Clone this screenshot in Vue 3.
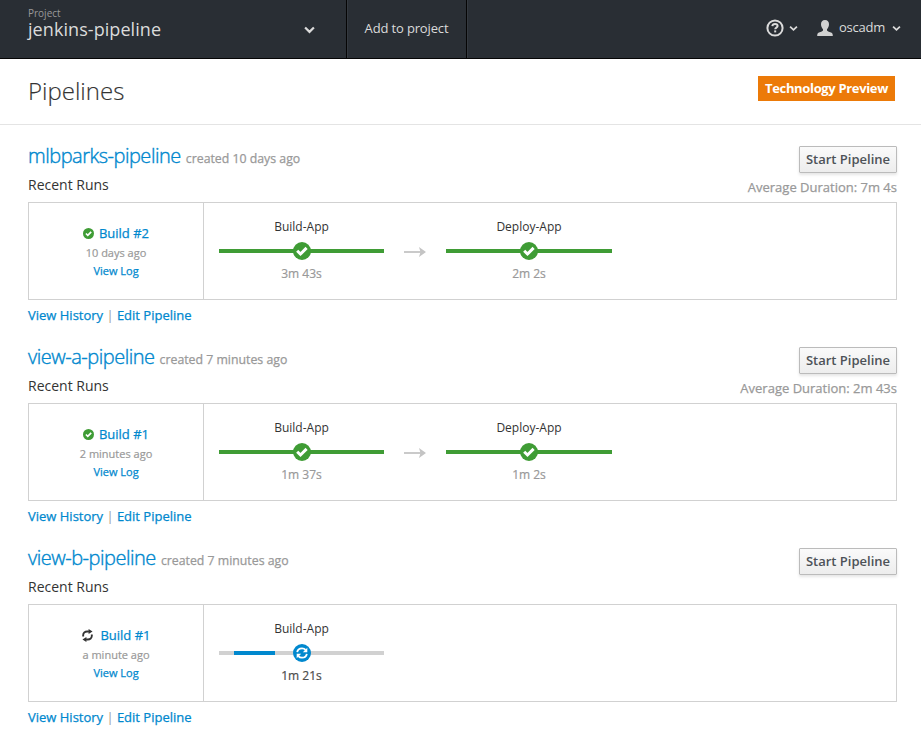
<script setup>
const pipelines = [
  {
    name: 'mlbparks-pipeline', created: 'created 10 days ago', average: 'Average Duration: 7m 4s',
    build: 'Build #2', age: '10 days ago', running: false,
    stages: [{ name: 'Build-App', time: '3m 43s' }, { name: 'Deploy-App', time: '2m 2s' }],
  },
  {
    name: 'view-a-pipeline', created: 'created 7 minutes ago', average: 'Average Duration: 2m 43s',
    build: 'Build #1', age: '2 minutes ago', running: false,
    stages: [{ name: 'Build-App', time: '1m 37s' }, { name: 'Deploy-App', time: '1m 2s' }],
  },
  {
    name: 'view-b-pipeline', created: 'created 7 minutes ago', average: '',
    build: 'Build #1', age: 'a minute ago', running: true,
    stages: [{ name: 'Build-App', time: '1m 21s' }],
  },
]
</script>

<template>
  <div class="page">
    <header class="navbar">
      <div class="project">
        <div class="project-text">
          <span class="project-label">Project</span>
          <span class="project-name">jenkins-pipeline</span>
        </div>
        <svg class="caret big" viewBox="0 0 10 7"><path d="M1 1.2 5 5.2 9 1.2" /></svg>
      </div>
      <div class="add">Add to project</div>
      <div class="user-menu">
        <svg class="help" viewBox="0 0 18 18">
          <circle cx="9" cy="9" r="7.6" />
          <path d="M6.3 7.2C6.500 5.700 7.600 5 9.100 5c1.500 0 2.500.8 2.500 2 0 1.700-2.400 1.600-2.400 3.300" />
          <path d="M9.200 11.400v2" />
        </svg>
        <svg class="caret small" viewBox="0 0 10 7"><path d="M1.200 1.500 5 5 8.800 1.500" /></svg>
        <svg class="person" viewBox="0 0 16 16">
          <path d="M8 0c2.600 0 4 1.700 4 4.300 0 2.100-.9 3.900-2 4.900v1.200c0 .8 3.200 1.500 4.600 2.400.9.600 1.200 1.600 1.200 3.200H.2c0-1.600.3-2.600 1.200-3.200C2.800 11.900 6 11.200 6 10.400V9.200c-1.100-1-2-2.800-2-4.900C4 1.700 5.400 0 8 0z" />
        </svg>
        <span class="user-name">oscadm</span>
        <svg class="caret small" viewBox="0 0 10 7"><path d="M1.200 1.500 5 5 8.800 1.500" /></svg>
      </div>
    </header>

    <div class="title-bar">
      <h1>Pipelines</h1>
      <span class="preview">Technology Preview</span>
    </div>

    <main>
      <section v-for="p in pipelines" :key="p.name" class="pipeline">
        <div class="heading">
          <div class="heading-left">
            <h2><a class="name">{{ p.name }}</a><small>{{ p.created }}</small></h2>
            <div class="recent">Recent Runs</div>
          </div>
          <div class="heading-right">
            <button>Start Pipeline</button>
            <div v-if="p.average" class="average">{{ p.average }}</div>
          </div>
        </div>
        <div class="run">
          <div class="build">
            <div class="build-title">
              <svg v-if="p.running" class="sync" viewBox="0 0 18 18">
                <path class="arc" d="M3 10.500V8.500C3 5.500 5.500 3.400 8.500 3.400H11M15 7.500v2c0 3-2.500 5.100-5.500 5.100H7" />
                <path class="tip" d="M10.500 0 16 3.400 10.500 7zM7.500 11v7L2 14.600z" />
              </svg>
              <svg v-else class="ok" viewBox="0 0 18 18">
                <circle cx="9" cy="9" r="9" /><path d="M4.800 9l3 3 5.600-5.800" />
              </svg>
              <a>{{ p.build }}</a>
            </div>
            <div class="age">{{ p.age }}</div>
            <a class="log">View Log</a>
          </div>
          <div class="stages">
            <template v-for="(s, i) in p.stages" :key="s.name">
              <svg v-if="i" class="arrow" viewBox="0 0 22 10">
                <path class="shaft" d="M0 5H18" /><path class="head" d="M15 0 22 5 15 10 16.500 5z" />
              </svg>
              <div class="stage" :class="{ running: p.running }">
                <div class="stage-name">{{ s.name }}</div>
                <div class="track">
                  <div v-if="p.running" class="progress"></div>
                  <svg v-if="p.running" class="status" viewBox="0 0 18 18">
                    <circle cx="9" cy="9" r="9" />
                    <path d="M4.200 8.200C4.600 5.700 6.500 4.300 9 4.300c1.500 0 2.700.5 3.600 1.600M13.800 9.800c-.4 2.500-2.300 3.900-4.800 3.900-1.500 0-2.700-.5-3.600-1.600" />
                    <path class="fill" d="M14.300 3.800v4.400H9.800zM3.700 14.200V9.800h4.500z" />
                  </svg>
                  <svg v-else class="status" viewBox="0 0 18 18">
                    <circle cx="9" cy="9" r="9" /><path class="check" d="M4.200 8.700l3.300 3.300 6.100-6.100" />
                  </svg>
                </div>
                <div class="stage-time">{{ s.time }}</div>
              </div>
            </template>
          </div>
        </div>
        <div class="links"><a>View History</a><span>|</span><a>Edit Pipeline</a></div>
      </section>
    </main>
  </div>
</template>

<style>
html, body { background: #fff; overflow: hidden; }
</style>

<style scoped>
* { box-sizing: border-box; }
.page {
  height: 730px; overflow: hidden; background: #fff; color: #333;
  font-family: "Open Sans", sans-serif; font-size: 13px; line-height: 20px;
}
svg { display: block; flex: none; }
a { color: #0088ce; -webkit-text-stroke: 0.25px #0088ce; }
.navbar {
  display: flex; height: 59px; background: #292e34;
  border-bottom: 1px solid #050505; color: #dbdbdb;
}
.project {
  display: flex; justify-content: space-between; width: 347px;
  padding: 7px 31px 0 28px; border-right: 1px solid #050505;
}
.project-text { display: flex; flex-direction: column; }
.project-label { font-size: 10px; line-height: 13px; color: #999; }
.project-name { font-size: 18px; line-height: 18px; letter-spacing: 0.07px; }
.caret { fill: none; stroke: #dbdbdb; stroke-width: 2; }
.caret.big { width: 11px; height: 8px; margin-top: 19px; }
.caret.small { width: 9px; height: 7px; margin-top: 1px; }
.add {
  display: flex; align-items: center; justify-content: center; width: 120px; padding: 0 1px 3px 0;
  letter-spacing: -0.15px;
  border-left: 1px solid #34393f; border-right: 1px solid #050505;
}
.user-menu {
  display: flex; flex: 1; align-items: center; justify-content: flex-end;
  padding: 0 20px 3px 0; border-left: 1px solid #34393f;
}
.help { width: 18px; height: 18px; margin-right: 5px; fill: none; stroke: #dbdbdb; stroke-width: 2; }
.person { width: 16px; height: 16px; margin: 0 6px 0 19px; fill: #d1d1d1; }
.user-name { margin: -2px 7px 0 0; letter-spacing: -0.25px; }
.title-bar {
  display: flex; justify-content: space-between; height: 66px;
  padding: 17px 26px 0 28px; border-bottom: 1px solid #e4e4e4;
}
h1 { margin: 0; font-size: 24px; line-height: 30px; font-weight: 300; -webkit-text-stroke: 0.15px #333; }
.preview {
  height: 25px; width: 137px; text-align: center; background: #ec7a08; color: #fff;
  font-weight: 700; line-height: 25px; letter-spacing: -0.34px; white-space: nowrap;
}
main { padding: 18px 24px 0 28px; }
.pipeline { height: 201px; }
.heading { display: flex; justify-content: space-between; height: 59px; }
h2 { display: flex; align-items: baseline; margin: 0; font-size: 20px; line-height: 25px; font-weight: 300; }
h2 .name { letter-spacing: -0.48px; -webkit-text-stroke-width: 0.4px; }
h2 small { margin-left: 5px; font-size: 12.3px; font-weight: 400; color: #999; -webkit-text-stroke: 0.25px #999; }
.recent { margin-top: 4px; font-size: 14px; }
.heading-right { display: flex; flex-direction: column; align-items: flex-end; padding-top: 3px; }
button {
  height: 27px; width: 98px; padding: 0 0 2px; border: 1px solid #bbb; border-radius: 1px;
  background: linear-gradient(#fafafa, #ededed); box-shadow: 0 2px 3px rgba(0, 0, 0, .1);
  font: 600 13px/20px "Open Sans", sans-serif; color: #4d5258;
}
.average { margin-top: 4px; color: #999; -webkit-text-stroke: 0.25px #999; }
.run { display: flex; height: 98px; border: 1px solid #d1d1d1; }
.build {
  display: flex; flex-direction: column; align-items: center;
  width: 175px; padding-top: 20px; border-right: 1px solid #d1d1d1;
}
.build-title { display: flex; align-items: center; line-height: 20px; }
.ok { width: 11px; height: 11px; margin-right: 5px; fill: #3f9c35; }
.ok path { fill: none; stroke: #fff; stroke-width: 2.800; }
.sync { width: 13px; height: 13px; margin-right: 6px; }
.sync .arc { fill: none; stroke: #333; stroke-width: 2.600; }
.sync .tip { fill: #333; }
.age { font-size: 11px; line-height: 20px; color: #999; -webkit-text-stroke: 0.2px #999; }
.log { font-size: 11px; line-height: 16px; }
.stages { display: flex; padding: 14px 15px 0; }
.stage { width: 165px; text-align: center; font-size: 12px; }
.arrow + .stage { width: 166px; }
.arrow { width: 22px; height: 10px; margin: 30px 20px 0; }
.arrow .shaft { fill: none; stroke: #c4c4c4; stroke-width: 1.800; }
.arrow .head { fill: #c4c4c4; }
.track { position: relative; height: 4px; margin: 12px 0 11px; background: #3f9c35; }
.running .track { background: #d1d1d1; }
.progress { width: 41px; height: 4px; margin-left: 15px; background: #0088ce; }
.status { position: absolute; left: 74px; top: -7px; width: 18px; height: 18px; fill: #3f9c35; }
.running .status { fill: #0088ce; }
.status path { fill: none; stroke: #fff; stroke-width: 1.800; }
.status .check { stroke-width: 3; }
.status .fill { fill: #fff; stroke: none; }
.stage-time { color: #999; -webkit-text-stroke: 0.2px; }
.running .stage-time { color: #4d4d4d; }
.links { display: flex; gap: 3.3px; margin-top: 5px; }
.links span { color: #999; }
</style>
